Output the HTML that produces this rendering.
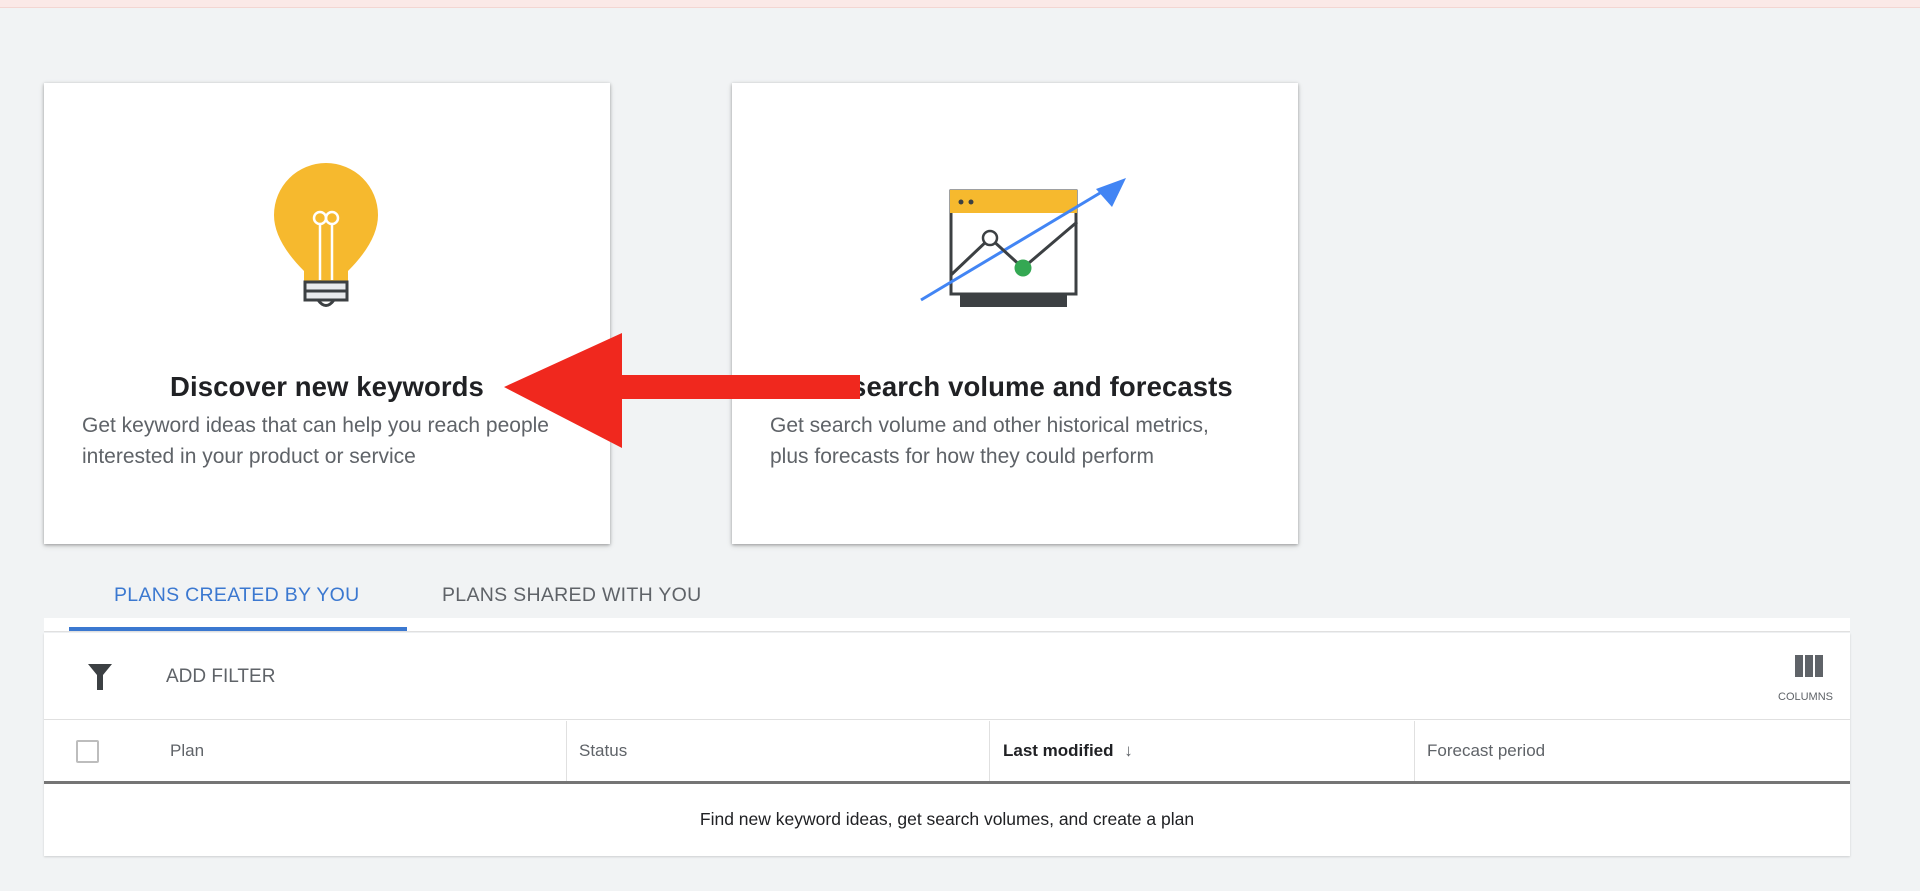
<!DOCTYPE html>
<html><head><meta charset="utf-8"><style>
*{margin:0;padding:0;box-sizing:border-box}
body{width:1920px;height:891px;background:#f1f3f4;font-family:"Liberation Sans",Arial,sans-serif;position:relative;overflow:hidden}
.abs{position:absolute}
.card{position:absolute;top:83px;width:566px;height:461px;background:#fff;box-shadow:0 1px 3px rgba(0,0,0,.3),0 2px 6px rgba(0,0,0,.12)}
.title{position:absolute;top:288px;left:0;width:100%;text-align:center;font-size:27.5px;color:#202124;font-weight:bold;letter-spacing:.1px}
.desc{position:absolute;top:327px;font-size:21px;line-height:31px;color:#5f6368}
.tab{position:absolute;top:584px;font-size:19.5px;font-weight:500;letter-spacing:.3px}
.hd{position:absolute;top:741px;font-size:17px;color:#5f6368}
.div{position:absolute;top:721px;height:60px;width:1px;background:#e0e0e0}
</style></head><body>
<div class="abs" style="left:0;top:0;width:1920px;height:8px;background:#fbe9e7;border-bottom:1px solid #f3d6d2"></div>

<div class="card" style="left:44px">
<svg class="abs" style="left:222px;top:78px" width="120" height="150" viewBox="0 0 120 150">
<path d="M8 54 A52 52 0 0 1 112 54 Q112 80 82 110 L82 121 L38 121 L38 110 Q8 80 8 54 Z" fill="#f6b92e"/>
<path d="M54 119 L54 63 M66 119 L66 63" stroke="#fff" stroke-width="2.5" fill="none"/>
<circle cx="54" cy="57" r="6" stroke="#fff" stroke-width="2.5" fill="none"/>
<circle cx="66" cy="57" r="6" stroke="#fff" stroke-width="2.5" fill="none"/>
<rect x="39" y="121" width="42" height="18" fill="#e8eaed" stroke="#3c4043" stroke-width="3"/>
<line x1="39" y1="130" x2="81" y2="130" stroke="#3c4043" stroke-width="3"/>
<path d="M52 139 Q60 150 68 139" fill="none" stroke="#3c4043" stroke-width="3"/>
</svg>
<div class="title">Discover new keywords</div>
<div class="desc" style="left:38px">Get keyword ideas that can help you reach people<br>interested in your product or service</div>
</div>

<div class="card" style="left:732px">
<svg class="abs" style="left:168px;top:77px" width="240" height="160" viewBox="900 160 240 160">
<rect x="951" y="191" width="125" height="103" fill="#fff" stroke="#3c4043" stroke-width="3"/>
<rect x="950" y="190" width="127" height="23" fill="#f6b92e"/>
<circle cx="961" cy="202" r="2.5" fill="#3c4043"/><circle cx="971" cy="202" r="2.5" fill="#3c4043"/>
<rect x="960" y="294" width="107" height="13" fill="#3c4043"/>
<line x1="921" y1="300" x2="1110" y2="187" stroke="#4285f4" stroke-width="3"/>
<path d="M1126 178 L1096 189 L1112 207 Z" fill="#4285f4"/>
<polyline points="951,275 990,238 1023,268 1077,222" fill="none" stroke="#3c4043" stroke-width="3"/>
<circle cx="990" cy="238" r="7" fill="#fff" stroke="#3c4043" stroke-width="2.5"/>
<circle cx="1023" cy="268" r="8.5" fill="#34a853"/>
</svg>
<div class="title">Get search volume and forecasts</div>
<div class="desc" style="left:38px">Get search volume and other historical metrics,<br>plus forecasts for how they could perform</div>
</div>

<svg class="abs" style="left:0;top:0" width="1920" height="891">
<path d="M504 387 L622 333 L622 375 L860 375 L860 399 L622 399 L622 448 Z" fill="#f0281e"/>
</svg>

<div class="tab" style="left:114px;color:#3b78d0">PLANS CREATED BY YOU</div>
<div class="tab" style="left:442px;color:#5f6368">PLANS SHARED WITH YOU</div>
<div class="abs" style="left:44px;top:618px;width:1806px;height:14px;background:#fff;border-bottom:1px solid #e0e0e0"></div>
<div class="abs" style="left:69px;top:627px;width:338px;height:4px;background:#3b78d0"></div>

<div class="abs" style="left:44px;top:633px;width:1806px;height:223px;background:#fff;box-shadow:0 1px 2px rgba(0,0,0,.15)"></div>
<svg class="abs" style="left:88px;top:664px" width="24" height="26" viewBox="0 0 24 26"><path d="M0 0 H24 L15 11 V26 H9 V11 Z" fill="#3c4043"/></svg>
<div class="abs" style="left:166px;top:666px;font-size:19px;color:#5f6368">ADD FILTER</div>
<svg class="abs" style="left:1795px;top:655px" width="28" height="22"><rect x="0" y="0" width="8" height="22" fill="#5f6368"/><rect x="10" y="0" width="8" height="22" fill="#5f6368"/><rect x="20" y="0" width="8" height="22" fill="#5f6368"/></svg>
<div class="abs" style="left:1778px;top:691px;font-size:11px;color:#5f6368">COLUMNS</div>
<div class="abs" style="left:44px;top:719px;width:1806px;height:1px;background:#e0e0e0"></div>
<div class="div" style="left:566px"></div><div class="div" style="left:989px"></div><div class="div" style="left:1414px"></div>
<div class="abs" style="left:76px;top:740px;width:23px;height:23px;border:2px solid #bdbdbd;border-radius:2px"></div>
<div class="hd" style="left:170px">Plan</div>
<div class="hd" style="left:579px">Status</div>
<div class="hd" style="left:1003px;color:#202124;font-weight:bold">Last modified <span style="font-weight:normal;color:#5f6368;margin-left:6px">↓</span></div>
<div class="hd" style="left:1427px">Forecast period</div>
<div class="abs" style="left:44px;top:781px;width:1806px;height:3px;background:#757575"></div>
<div class="abs" style="left:44px;top:809px;width:1806px;text-align:center;font-size:17.5px;color:#202124">Find new keyword ideas, get search volumes, and create a plan</div>
</body></html>
